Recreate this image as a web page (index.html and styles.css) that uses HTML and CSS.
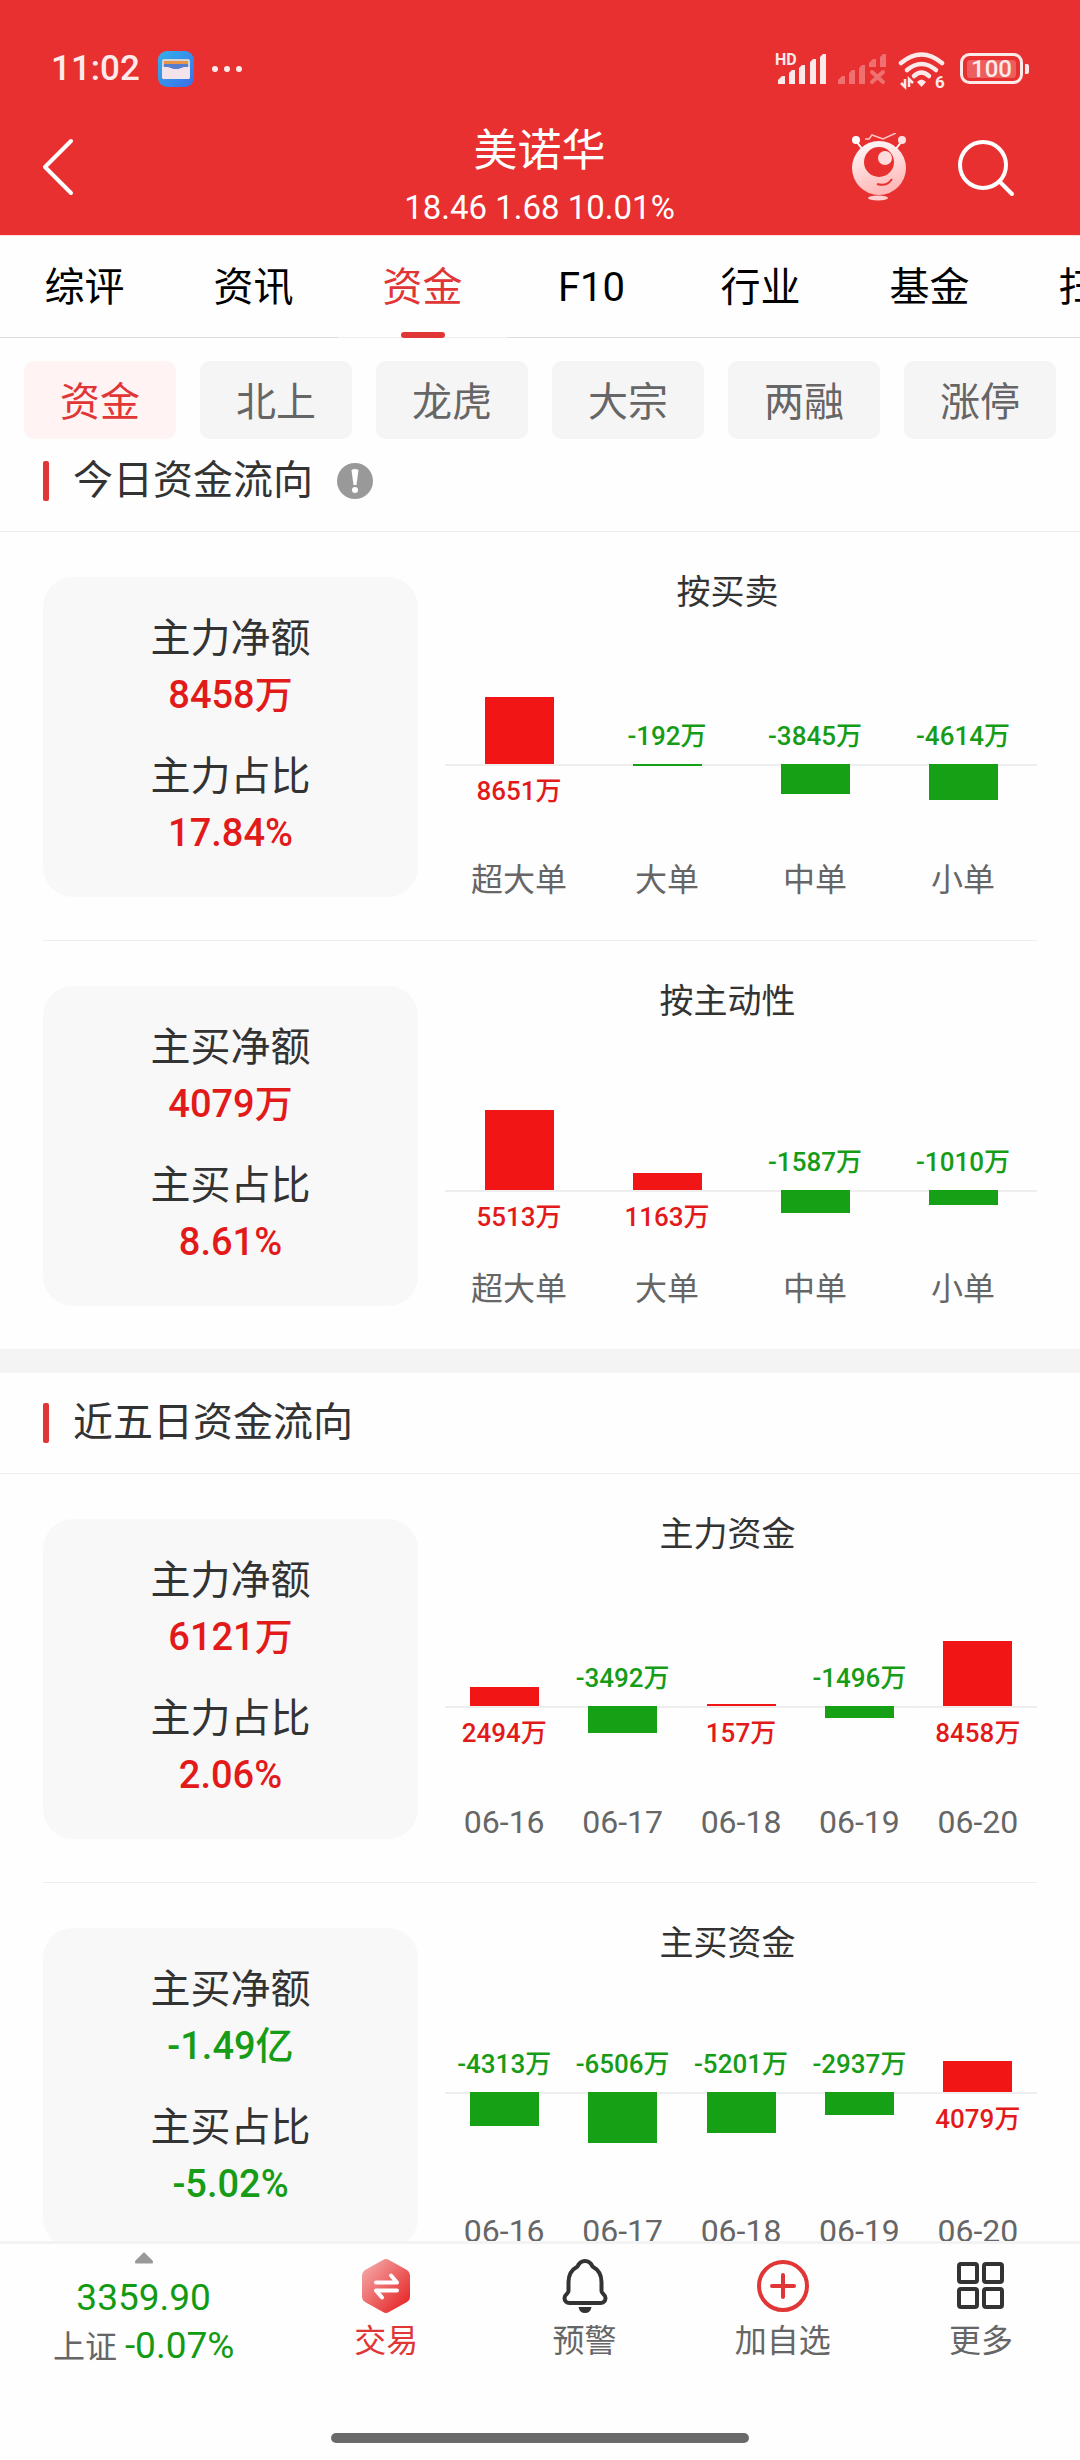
FILE: index.html
```html
<!DOCTYPE html>
<html lang="zh-CN">
<head>
    <meta charset="UTF-8">
    <meta name="viewport" content="width=device-width, initial-scale=1.0">
    <title>美诺华 - 资金</title>
    <link rel="stylesheet" href="styles.css">
</head>
<body>

    <header class="header">
        <!-- 状态栏 -->
        <div class="status-bar">
            <span class="time">11:02</span>
            <svg class="app-icon" width="36" height="36" viewBox="0 0 36 36">
                <defs>
                    <linearGradient id="appBg" x1="0" y1="0" x2="1" y2="1">
                        <stop offset="0" stop-color="#1fc0ff"/>
                        <stop offset="1" stop-color="#2b74ff"/>
                    </linearGradient>
                </defs>
                <rect width="36" height="36" rx="9" fill="url(#appBg)"/>
                <rect x="4" y="8" width="28" height="20" rx="2" fill="#cfe6e4"/>
                <rect x="6" y="10" width="24" height="3" fill="#e9a04c"/>
                <rect x="6" y="13" width="24" height="6" fill="#4a86e0"/>
                <path d="M4 16h5c3 0 4 2 9 2s6-2 9-2h5v10a2 2 0 0 1-2 2H6a2 2 0 0 1-2-2z" fill="#f4f8ff"/>
            </svg>
            <svg class="dots" width="32" height="8" viewBox="0 0 32 8" fill="#fff">
                <circle cx="4" cy="4" r="3"/><circle cx="16" cy="4" r="3"/><circle cx="28" cy="4" r="3"/>
            </svg>
            <svg class="signals" width="256" height="48" viewBox="775 45 256 48" fill="#fff">
                <text x="775" y="65" font-size="16" font-weight="700">HD</text>
                <g>
                    <path d="M778 84v-4l4-4h3v8zM789 84v-11l3-3h3v14zM799 84v-16l3-3h3v19zM810 84v-22l3-3h3v25zM820 84v-27l3-3h3v30z"/>
                </g>
                <g opacity="0.35">
                    <path d="M838 84v-4l4-4h3v8zM849 84v-11l3-3h3v14zM859 84v-16l3-3h3v19zM869 67v-4l4-4h3v8zM880 67v-10l3-3h3v13z"/>
                    <path d="M872 72l11 10M883 72l-11 10" stroke="#fff" stroke-width="4" stroke-linecap="round"/>
                </g>
                <g fill="none" stroke="#fff" stroke-width="4.5" stroke-linecap="round">
                    <path d="M901 63Q921.500 46 942 63"/>
                    <path d="M907 70Q921.500 58 936 70"/>
                    <path d="M914 76Q921.500 69 929 76"/>
                </g>
                <path d="M917 82q4.500-5 9 0l-4.500 5z"/>
                <path d="M905 79v8l-4-4M909 87v-8l4 4" fill="none" stroke="#fff" stroke-width="2.500"/>
                <text x="935" y="88" font-size="17" font-weight="700">6</text>
                <rect x="961.500" y="54.500" width="60" height="28" rx="8" fill="none" stroke="#fff" stroke-width="3"/>
                <rect x="967" y="60" width="49" height="18" rx="3" opacity="0.25"/>
                <text x="991.500" y="77" font-size="24" font-weight="500" text-anchor="middle">100</text>
                <path d="M1025 64h2a2 2 0 0 1 2 2v6a2 2 0 0 1-2 2h-2z"/>
            </svg>
        </div>

        <!-- 标题栏 -->
        <div class="title-bar">
            <button class="icon-btn back" aria-label="返回">
                <svg width="34" height="60" viewBox="0 0 34 60" fill="none" stroke="#fff" stroke-width="4" stroke-linecap="round" stroke-linejoin="round">
                    <path d="M29 4L3 30l26 26"/>
                </svg>
            </button>
            <div class="stock">
                <h1>美诺华</h1>
                <p>18.46 1.68 10.01%</p>
            </div>
            <div class="actions">
                <button class="icon-btn" aria-label="助手">
                    <svg width="56" height="68" viewBox="0 0 56 68">
                        <defs>
                            <linearGradient id="robot" x1="0" y1="0" x2="0.300" y2="1">
                                <stop offset="0" stop-color="#fff"/>
                                <stop offset="1" stop-color="#ffb9b9"/>
                            </linearGradient>
                        </defs>
                        <path d="M14 6h4l3-4 11 4 13-6" fill="none" stroke="#ffc4c4" stroke-width="1.500"/>
                        <path d="M5 8l7 9M51 8l-7 9" stroke="#fff" stroke-width="2"/>
                        <circle cx="5" cy="7" r="4" fill="#fff"/>
                        <circle cx="51" cy="7" r="4" fill="#ffe0e0"/>
                        <circle cx="28" cy="35" r="27" fill="url(#robot)"/>
                        <circle cx="28" cy="29" r="15" fill="#e83030"/>
                        <circle cx="34" cy="25" r="7" fill="#ffdcdc"/>
                        <path d="M26 51q10 3 15-5" fill="none" stroke="#e83030" stroke-width="2"/>
                        <ellipse cx="27" cy="65" rx="10" ry="2.500" fill="#ffd0d0"/>
                    </svg>
                </button>
                <button class="icon-btn" aria-label="搜索">
                    <svg width="60" height="60" viewBox="0 0 60 60" fill="none" stroke="#fff" stroke-width="4" stroke-linecap="round">
                        <circle cx="27" cy="28" r="23"/>
                        <path d="M44 45l12 12"/>
                    </svg>
                </button>
            </div>
        </div>
    </header>

    <nav class="tabs">
        <a href="#">综评</a>
        <a href="#">资讯</a>
        <a href="#" class="active">资金</a>
        <a href="#">F10</a>
        <a href="#">行业</a>
        <a href="#">基金</a>
        <a href="#">扫雷</a>
    </nav>

    <div class="chips">
        <button class="chip active">资金</button>
        <button class="chip">北上</button>
        <button class="chip">龙虎</button>
        <button class="chip">大宗</button>
        <button class="chip">两融</button>
        <button class="chip">涨停</button>
    </div>

    <main class="content">
        <!-- 今日资金流向 -->
        <section class="section">
            <div class="section-head">
                <h2>今日资金流向</h2>
                <svg width="36" height="36" viewBox="0 0 36 36">
                    <circle cx="18" cy="18" r="18" fill="#999"/>
                    <path d="M14.500 7q3.500-2 7 0l-2 15h-3z" fill="#fff"/>
                    <circle cx="18" cy="27" r="3" fill="#fff"/>
                </svg>
            </div>

            <div class="row">
                <div class="card">
                    <div class="stat"><span>主力净额</span><b class="up">8458万</b></div>
                    <div class="stat"><span>主力占比</span><b class="up">17.84%</b></div>
                </div>
                <div class="chart">
                    <h3>按买卖</h3>
                    <div class="plot">
                        <div class="col up">
                            <div class="above" style="height: 155px"><i class="bar" style="height: 67px"></i></div>
                            <div class="below"><span class="num">8651万</span></div>
                            <div class="name">超大单</div>
                        </div>
                        <div class="col down">
                            <div class="above" style="height: 155px"><span class="num">-192万</span></div>
                            <div class="below"><i class="bar" style="height: 2px"></i></div>
                            <div class="name">大单</div>
                        </div>
                        <div class="col down">
                            <div class="above" style="height: 155px"><span class="num">-3845万</span></div>
                            <div class="below"><i class="bar" style="height: 30px"></i></div>
                            <div class="name">中单</div>
                        </div>
                        <div class="col down">
                            <div class="above" style="height: 155px"><span class="num">-4614万</span></div>
                            <div class="below"><i class="bar" style="height: 36px"></i></div>
                            <div class="name">小单</div>
                        </div>
                    </div>
                </div>
            </div>

            <div class="row">
                <div class="card">
                    <div class="stat"><span>主买净额</span><b class="up">4079万</b></div>
                    <div class="stat"><span>主买占比</span><b class="up">8.61%</b></div>
                </div>
                <div class="chart">
                    <h3>按主动性</h3>
                    <div class="plot">
                        <div class="col up">
                            <div class="above" style="height: 172px"><i class="bar" style="height: 80px"></i></div>
                            <div class="below"><span class="num">5513万</span></div>
                            <div class="name">超大单</div>
                        </div>
                        <div class="col up">
                            <div class="above" style="height: 172px"><i class="bar" style="height: 17px"></i></div>
                            <div class="below"><span class="num">1163万</span></div>
                            <div class="name">大单</div>
                        </div>
                        <div class="col down">
                            <div class="above" style="height: 172px"><span class="num">-1587万</span></div>
                            <div class="below"><i class="bar" style="height: 23px"></i></div>
                            <div class="name">中单</div>
                        </div>
                        <div class="col down">
                            <div class="above" style="height: 172px"><span class="num">-1010万</span></div>
                            <div class="below"><i class="bar" style="height: 15px"></i></div>
                            <div class="name">小单</div>
                        </div>
                    </div>
                </div>
            </div>
        </section>

        <!-- 近五日资金流向 -->
        <section class="section">
            <div class="section-head">
                <h2>近五日资金流向</h2>
            </div>

            <div class="row">
                <div class="card">
                    <div class="stat"><span>主力净额</span><b class="up">6121万</b></div>
                    <div class="stat"><span>主力占比</span><b class="up">2.06%</b></div>
                </div>
                <div class="chart">
                    <h3>主力资金</h3>
                    <div class="plot">
                        <div class="col up">
                            <div class="above" style="height: 155px"><i class="bar" style="height: 19px"></i></div>
                            <div class="below"><span class="num">2494万</span></div>
                            <div class="name">06-16</div>
                        </div>
                        <div class="col down">
                            <div class="above" style="height: 155px"><span class="num">-3492万</span></div>
                            <div class="below"><i class="bar" style="height: 27px"></i></div>
                            <div class="name">06-17</div>
                        </div>
                        <div class="col up">
                            <div class="above" style="height: 155px"><i class="bar" style="height: 2px"></i></div>
                            <div class="below"><span class="num">157万</span></div>
                            <div class="name">06-18</div>
                        </div>
                        <div class="col down">
                            <div class="above" style="height: 155px"><span class="num">-1496万</span></div>
                            <div class="below"><i class="bar" style="height: 12px"></i></div>
                            <div class="name">06-19</div>
                        </div>
                        <div class="col up">
                            <div class="above" style="height: 155px"><i class="bar" style="height: 65px"></i></div>
                            <div class="below"><span class="num">8458万</span></div>
                            <div class="name">06-20</div>
                        </div>
                    </div>
                </div>
            </div>

            <div class="row">
                <div class="card">
                    <div class="stat"><span>主买净额</span><b class="down">-1.49亿</b></div>
                    <div class="stat"><span>主买占比</span><b class="down">-5.02%</b></div>
                </div>
                <div class="chart">
                    <h3>主买资金</h3>
                    <div class="plot">
                        <div class="col down">
                            <div class="above" style="height: 132px"><span class="num">-4313万</span></div>
                            <div class="below"><i class="bar" style="height: 34px"></i></div>
                            <div class="name">06-16</div>
                        </div>
                        <div class="col down">
                            <div class="above" style="height: 132px"><span class="num">-6506万</span></div>
                            <div class="below"><i class="bar" style="height: 51px"></i></div>
                            <div class="name">06-17</div>
                        </div>
                        <div class="col down">
                            <div class="above" style="height: 132px"><span class="num">-5201万</span></div>
                            <div class="below"><i class="bar" style="height: 41px"></i></div>
                            <div class="name">06-18</div>
                        </div>
                        <div class="col down">
                            <div class="above" style="height: 132px"><span class="num">-2937万</span></div>
                            <div class="below"><i class="bar" style="height: 23px"></i></div>
                            <div class="name">06-19</div>
                        </div>
                        <div class="col up">
                            <div class="above" style="height: 132px"><i class="bar" style="height: 31px"></i></div>
                            <div class="below"><span class="num">4079万</span></div>
                            <div class="name">06-20</div>
                        </div>
                    </div>
                </div>
            </div>
        </section>
    </main>

    <!-- 底部工具栏 -->
    <footer class="footer">
        <div class="toolbar">
            <a href="#" class="index">
                <svg width="20" height="12" viewBox="0 0 20 12"><path d="M8.500 1.500q1.500-2 3 0l7 7q1.500 3-1 3h-15q-2.500 0-1-3z" fill="#999"/></svg>
                <strong>3359.90</strong>
                <span>上证 <em>-0.07%</em></span>
            </a>
            <button class="tool trade">
                <svg width="56" height="56" viewBox="0 0 56 56">
                    <defs>
                        <linearGradient id="hex" x1="0.100" y1="0.100" x2="0.900" y2="0.900">
                            <stop offset="0" stop-color="#f4a3a3"/>
                            <stop offset="1" stop-color="#e62828"/>
                        </linearGradient>
                    </defs>
                    <path d="M25 2q3-2 6 0l18 10q3 2 3 5v22q0 3-3 5L31 54q-3 2-6 0L7 44q-3-2-3-5V17q0-3 3-5z" fill="url(#hex)"/>
                    <path d="M18 24.500h21l-6-7M39 32.500H18l6 7" fill="none" stroke="#fff" stroke-width="4" stroke-linecap="round" stroke-linejoin="round"/>
                </svg>
                <span>交易</span>
            </button>
            <button class="tool">
                <svg width="56" height="56" viewBox="0 0 56 56">
                    <path d="M28 3c-4 0-6 2-7.500 5.500C14 12 11.500 18 11.500 24v9c0 3-4 3-4 7 0 3 2 5 5 5h31c3 0 5-2 5-5 0-4-4-4-4-7v-9c0-6-2.500-12-9-15.500C34 5 32 3 28 3z" fill="none" stroke="#333" stroke-width="4" stroke-linejoin="round"/>
                    <path d="M21.500 49h13q-1 6-6.500 6t-6.500-6z" fill="#333"/>
                </svg>
                <span>预警</span>
            </button>
            <button class="tool">
                <svg width="56" height="56" viewBox="0 0 56 56" fill="none" stroke="#e03636" stroke-width="4" stroke-linecap="round">
                    <circle cx="28" cy="28" r="24"/>
                    <path d="M17 28h22M28 17v22"/>
                </svg>
                <span>加自选</span>
            </button>
            <button class="tool">
                <svg width="56" height="56" viewBox="0 0 56 56" fill="none" stroke="#333" stroke-width="4">
                    <rect x="6" y="6" width="18" height="18" rx="2"/><rect x="31" y="6" width="18" height="18" rx="2"/>
                    <rect x="6" y="31" width="18" height="18" rx="2"/><rect x="31" y="31" width="18" height="18" rx="2"/>
                </svg>
                <span>更多</span>
            </button>
        </div>
        <div class="home-bar"></div>
    </footer>

</body>
</html>
```

FILE: styles.css
```css
* {
    box-sizing: border-box;
}
body {
    margin: 0;
    font-family: Roboto, "Noto Sans CJK SC", sans-serif;
    background-color: #fefefe;
    color: #333;
    overflow-x: hidden;
}
h1, h2, h3, p {
    margin: 0;
    font-weight: 400;
}
a {
    color: inherit;
    text-decoration: none;
}
button {
    padding: 0;
    border: none;
    background: none;
    font-family: inherit;
    cursor: pointer;
}
svg {
    display: block;
    flex: none;
}

/* 顶部 */
.header {
    background-color: #e83030;
    color: white;
    border-bottom: 1px solid #ffdddd;
}
.status-bar {
    display: flex;
    align-items: center;
    height: 119px;
    padding: 18px 49px 0 51px;
    opacity: 0.9;
}
.time {
    font-size: 35px;
    font-weight: 500;
}
.app-icon {
    margin-left: 18px;
}
.dots {
    margin-left: 17px;
}
.signals {
    margin-left: auto;
}
.title-bar {
    display: grid;
    grid-template-columns: 1fr auto 1fr;
    height: 116px;
    padding: 0 64px 0 42px;
}
.icon-btn {
    display: block;
}
.back, .actions {
    height: 96px;
}
.back {
    justify-self: start;
}
.actions {
    display: flex;
    justify-content: flex-end;
    align-items: center;
    gap: 49px;
}
.stock {
    text-align: center;
    margin-left: 21px;
}
.stock h1 {
    font-size: 44px;
    line-height: 64px;
}
.stock p {
    font-size: 33px;
    line-height: 50px;
}

/* 标签 */
.tabs {
    display: flex;
    height: 102px;
    overflow: hidden;
    font-size: 40px;
    line-height: 104px;
    color: #000;
}
.tabs a {
    flex: 0 0 169px;
    height: 102px;
    text-align: center;
    border-bottom: 1px solid #ddd;
}
.tabs .active {
    display: flex;
    flex-direction: column;
    align-items: center;
    color: #e03636;
    border-bottom-color: #eee;
}
.tabs .active::after {
    content: "";
    flex: none;
    width: 44px;
    height: 6px;
    margin-top: -8px;
    border-radius: 3px;
    background-color: #e03636;
}
.chips {
    display: flex;
    gap: 24px;
    padding: 23px 24px 0;
}
.chip {
    flex: 1;
    height: 78px;
    padding-bottom: 3px;
    border-radius: 10px;
    background-color: #f5f5f5;
    color: #666;
    font-size: 40px;
}
.chip.active {
    background-color: #fff3f3;
    color: #e03636;
}

/* 资金流向 */
.content {
    margin-top: -8px;
}
.section + .section {
    border-top: 24px solid #f4f4f4;
}
.section-head {
    display: flex;
    align-items: center;
    gap: 24px;
    height: 101px;
    padding: 0 43px;
    border-bottom: 1px solid #eee;
}
.section-head h2 {
    font-size: 40px;
    line-height: 48px;
}
.section-head::before {
    content: "";
    width: 6px;
    height: 40px;
    border-radius: 2px;
    background-color: #e03636;
}
.row {
    display: flex;
    margin: 0 43px;
    padding: 45px 0 43px;
}
.row + .row {
    border-top: 1px solid #eee;
}
.card {
    flex: 375 1 0;
    display: flex;
    flex-direction: column;
    gap: 26px;
    padding: 34px 0 36px;
    border-radius: 30px;
    background-color: #f8f8f8;
}
.stat {
    display: flex;
    flex-direction: column;
    text-align: center;
    line-height: 56px;
    font-size: 40px;
}
.stat b {
    font-size: 38px;
    font-weight: 500;
}
.up {
    color: #e21a1a;
}
.down {
    color: #169c16;
}
.chart {
    flex: 619 1 0;
}
.chart h3 {
    margin-bottom: 2px;
    font-size: 34px;
    line-height: 30px;
    text-align: center;
}
.plot {
    display: flex;
    height: 288px;
    padding-left: 27px;
}
.col {
    flex: 1;
    display: flex;
    flex-direction: column;
}
.above, .below {
    display: flex;
    flex-direction: column;
    align-items: center;
}
.above {
    justify-content: flex-end;
}
.below {
    flex: 1;
    background: linear-gradient(#eee, #eee) top / 100% 2px no-repeat;
}
.bar {
    width: 69px;
}
.up .bar {
    background-color: #f21515;
}
.down .bar {
    background-color: #16a016;
}
.num {
    margin: 11px 0 12px;
    font-size: 26px;
    font-weight: 500;
    line-height: 32px;
    white-space: nowrap;
}
.name {
    font-size: 32px;
    line-height: 34px;
    text-align: center;
    color: #666;
}

/* 底部 */
.footer {
    position: fixed;
    left: 0;
    right: 0;
    bottom: 0;
    padding-bottom: 17px;
    background-color: #fefefe;
    border-top: 3px solid #f3f3f3;
}
.toolbar {
    display: flex;
    height: 189px;
}
.index {
    flex: 287;
    display: flex;
    flex-direction: column;
    align-items: center;
    padding-top: 8px;
    font-size: 32px;
    color: #666;
}
.index strong {
    margin-top: 10px;
    font-size: 37px;
    font-weight: 400;
    line-height: 48px;
    color: #129a12;
}
.index em {
    font-size: 37px;
    font-style: normal;
    color: #129a12;
}
.index span {
    line-height: 48px;
}
.tool {
    flex: 198;
    display: flex;
    flex-direction: column;
    align-items: center;
    gap: 3px;
    padding-top: 14px;
    font-size: 32px;
    line-height: 48px;
    color: #666;
}
.trade {
    color: #e03636;
}
.home-bar {
    width: 418px;
    height: 10px;
    margin: 0 auto;
    border-radius: 5px;
    background-color: #6a6a6a;
}
```
